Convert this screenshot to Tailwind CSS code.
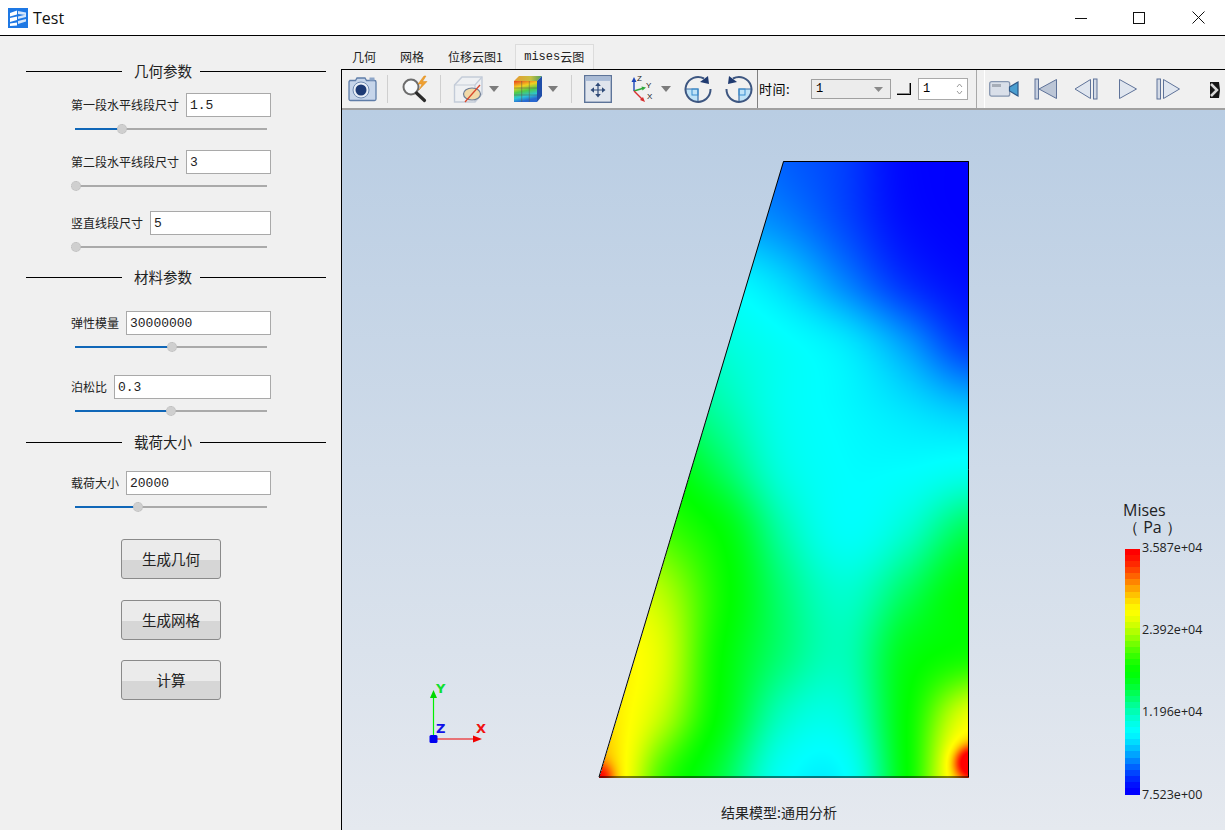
<!DOCTYPE html>
<html lang="zh">

<head>
    <meta charset="UTF-8" />
    <title>Test</title>
    <script src="https://cdn.jsdelivr.net/npm/@tailwindcss/browser@4"></script>
</head>

<body class="w-[1225px] h-[830px] overflow-hidden bg-[#f0f0f0] text-black font-['Noto_Sans_CJK_SC','Noto_Sans',sans-serif]">
    <!-- TITLE BAR -->
    <header class="h-9 bg-white border-b border-black flex items-center pl-[8px]">
        <svg width="20" height="20" viewBox="0 0 20 20">
            <rect width="20" height="20" fill="#1e78e4" />
            <path d="M2 5l7-2.500v4L2 8.500zM2 10l7-1.500v3.500L2 14zM2 15.500l7-1v3L2 18z" fill="#fff" />
            <path d="M10 3l8 1.500v2.500l-8-1zM10 8.500l8-2v2.500l-8 2zM10 13l8-2v2.500l-8 2.500z" fill="#d4e6fb" />
        </svg>
        <span class="ml-[5px] text-[16px] leading-none font-['Open_Sans',sans-serif] text-[#111]">Test</span>
        <div class="ml-auto flex items-center h-full">
            <svg class="mr-[46px]" width="12" height="12" viewBox="0 0 12 12"><path d="M0 6.500h12" stroke="#111" /></svg>
            <svg class="mr-[47px]" width="12" height="12" viewBox="0 0 12 12"><rect x=".5" y=".5" width="11" height="11" fill="none" stroke="#111" /></svg>
            <svg class="mr-[20px]" width="13" height="13" viewBox="0 0 13 13"><path d="M.5.500l12 12M12.500.500l-12 12" stroke="#111" /></svg>
        </div>
    </header>

    <div class="flex h-[794px]">
        <!-- LEFT PANEL -->
        <aside class="w-[341px] shrink-0 bg-[#f0f0f0] pt-[25px] text-[#222]">
            <div class="flex items-center pl-[26px] pr-[15px] h-5 gap-2 text-[14.5px] leading-none">
                <span class="w-[96px] h-px bg-black"></span><span class="ml-1">几何参数</span><span class="flex-1 h-px bg-black"></span>
            </div>
            <div class="mt-[12px] flex items-center gap-[7px] pl-[71px] pr-[70px] h-6 text-[12px]">
                <label class="whitespace-nowrap">第一段水平线段尺寸</label>
                <input class="flex-1 min-w-0 h-6 bg-white border border-[#a9a9a9] pl-[3px] text-[13px] font-['Liberation_Mono',monospace] outline-none" value="1.5" />
            </div>
            <div class="relative ml-[75px] mt-[11px] w-[192px] h-[2px] bg-[#aaaaaa]">
                <div class="h-full w-[47px] bg-[#1067b8]"></div>
                <span class="absolute left-[42px] top-[-4px] w-[10px] h-[10px] rounded-full bg-[#cfcfcf] border border-dotted border-[#bbb]"></span>
            </div>
            <div class="mt-[20px] flex items-center gap-[7px] pl-[71px] pr-[70px] h-6 text-[12px]">
                <label class="whitespace-nowrap">第二段水平线段尺寸</label>
                <input class="flex-1 min-w-0 h-6 bg-white border border-[#a9a9a9] pl-[3px] text-[13px] font-['Liberation_Mono',monospace] outline-none" value="3" />
            </div>
            <div class="relative ml-[75px] mt-[11px] w-[192px] h-[2px] bg-[#aaaaaa]">
                <span class="absolute left-[-4px] top-[-4px] w-[10px] h-[10px] rounded-full bg-[#cfcfcf] border border-dotted border-[#bbb]"></span>
            </div>
            <div class="mt-[24px] flex items-center gap-[7px] pl-[71px] pr-[70px] h-6 text-[12px]">
                <label class="whitespace-nowrap">竖直线段尺寸</label>
                <input class="flex-1 min-w-0 h-6 bg-white border border-[#a9a9a9] pl-[3px] text-[13px] font-['Liberation_Mono',monospace] outline-none" value="5" />
            </div>
            <div class="relative ml-[75px] mt-[11px] w-[192px] h-[2px] bg-[#aaaaaa]">
                <span class="absolute left-[-4px] top-[-4px] w-[10px] h-[10px] rounded-full bg-[#cfcfcf] border border-dotted border-[#bbb]"></span>
            </div>

            <div class="mt-[19px] flex items-center pl-[26px] pr-[15px] h-5 gap-2 text-[14.5px] leading-none">
                <span class="w-[96px] h-px bg-black"></span><span class="ml-1">材料参数</span><span class="flex-1 h-px bg-black"></span>
            </div>
            <div class="mt-[24px] flex items-center gap-[7px] pl-[71px] pr-[70px] h-6 text-[12px]">
                <label class="whitespace-nowrap">弹性模量</label>
                <input class="flex-1 min-w-0 h-6 bg-white border border-[#a9a9a9] pl-[3px] text-[13px] font-['Liberation_Mono',monospace] outline-none" value="30000000" />
            </div>
            <div class="relative ml-[75px] mt-[11px] w-[192px] h-[2px] bg-[#aaaaaa]">
                <div class="h-full w-[97px] bg-[#1067b8]"></div>
                <span class="absolute left-[92px] top-[-4px] w-[10px] h-[10px] rounded-full bg-[#cfcfcf] border border-dotted border-[#bbb]"></span>
            </div>
            <div class="mt-[27px] flex items-center gap-[7px] pl-[71px] pr-[70px] h-6 text-[12px]">
                <label class="whitespace-nowrap">泊松比</label>
                <input class="flex-1 min-w-0 h-6 bg-white border border-[#a9a9a9] pl-[3px] text-[13px] font-['Liberation_Mono',monospace] outline-none" value="0.3" />
            </div>
            <div class="relative ml-[75px] mt-[11px] w-[192px] h-[2px] bg-[#aaaaaa]">
                <div class="h-full w-[96px] bg-[#1067b8]"></div>
                <span class="absolute left-[91px] top-[-4px] w-[10px] h-[10px] rounded-full bg-[#cfcfcf] border border-dotted border-[#bbb]"></span>
            </div>

            <div class="mt-[20px] flex items-center pl-[26px] pr-[15px] h-5 gap-2 text-[14.5px] leading-none">
                <span class="w-[96px] h-px bg-black"></span><span class="ml-1">载荷大小</span><span class="flex-1 h-px bg-black"></span>
            </div>
            <div class="mt-[19px] flex items-center gap-[7px] pl-[71px] pr-[70px] h-6 text-[12px]">
                <label class="whitespace-nowrap">载荷大小</label>
                <input class="flex-1 min-w-0 h-6 bg-white border border-[#a9a9a9] pl-[3px] text-[13px] font-['Liberation_Mono',monospace] outline-none" value="20000" />
            </div>
            <div class="relative ml-[75px] mt-[11px] w-[192px] h-[2px] bg-[#aaaaaa]">
                <div class="h-full w-[63px] bg-[#1067b8]"></div>
                <span class="absolute left-[58px] top-[-4px] w-[10px] h-[10px] rounded-full bg-[#cfcfcf] border border-dotted border-[#bbb]"></span>
            </div>

            <div class="mt-[31px] flex flex-col items-center pl-[1px]">
                <button class="w-[100px] h-10 rounded-[3px] border border-[#8a8a8a] text-[14.5px] text-[#222] bg-[linear-gradient(#ebebeb_52%,#d6d6d6_52%)]">生成几何</button>
                <button class="mt-[21px] w-[100px] h-10 rounded-[3px] border border-[#8a8a8a] text-[14.5px] text-[#222] bg-[linear-gradient(#ebebeb_52%,#d6d6d6_52%)]">生成网格</button>
                <button class="mt-[20px] w-[100px] h-10 rounded-[3px] border border-[#8a8a8a] text-[14.5px] text-[#222] bg-[linear-gradient(#ebebeb_52%,#d6d6d6_52%)]">计算</button>
            </div>
        </aside>

        <!-- RIGHT PANEL -->
        <main class="flex-1 flex flex-col min-w-0">
            <!-- TABS -->
            <nav class="h-[33px] flex items-end text-[12px] text-[#222] leading-none">
                <span class="ml-[11px] h-[24px] flex items-center">几何</span>
                <span class="ml-[24px] h-[24px] flex items-center">网格</span>
                <span class="ml-[24px] h-[24px] flex items-center">位移云图1</span>
                <span class="ml-[12px] w-[79px] h-[25px] flex items-center justify-center border border-b-0 border-[#dcdcdc] bg-[#f3f3f3]"><span class="font-['Liberation_Mono',monospace]">mises</span>云图</span>
            </nav>

            <div class="flex-1 flex flex-col border-l border-t border-black">
                <!-- TOOLBAR -->
                <div class="h-10 shrink-0 flex items-center bg-[#f0f0f0] border-b-2 border-[#a0a0a0] relative">
                    <svg class="ml-[5px]" width="30" height="26" viewBox="0 0 30 26">
                        <path d="M2.500 4.500h6l1.500-2.500h8l1.500 2.500h8a1.500 1.500 0 0 1 1.500 1.500v17a1.500 1.500 0 0 1-1.500 1.500h-24a1.500 1.500 0 0 1-1.500-1.500v-17a1.500 1.500 0 0 1 1.500-1.500z" fill="#c6d5ea" stroke="#5f7da8" stroke-width="1.300" />
                        <rect x="22.500" y="1.500" width="5" height="3" fill="#8ea6c8" />
                        <circle cx="14" cy="14" r="8" fill="#e9eff7" stroke="#6f8ab0" />
                        <circle cx="14" cy="14" r="5.500" fill="#1d3a74" />
                    </svg>
                    <span class="ml-[10px] w-px h-[28px] bg-[#cfcfcf]"></span>
                    <svg class="ml-[12px]" width="31" height="28" viewBox="0 0 31 28">
                        <circle cx="11" cy="12" r="7.500" fill="#f7f9fb" stroke="#6d6d6d" stroke-width="2" />
                        <path d="M16.500 18l8 7.500" stroke="#2b2b2b" stroke-width="3.200" stroke-linecap="round" />
                        <path d="M24 1l-6 8h4l-3 6 8-8.500h-4.500L26 1z" fill="#f0a030" stroke="#d98a1c" stroke-width=".5" />
                    </svg>
                    <span class="ml-[9px] w-px h-[28px] bg-[#cfcfcf]"></span>
                    <svg class="ml-[12px]" width="31" height="30" viewBox="0 0 31 30">
                        <path d="M1.500 11L9 3h20v17l-7 8H1.500z" fill="#eef0f3" stroke="#c3cbd8" stroke-width="1.400" />
                        <path d="M1.500 11h20.500v17M22 11l7-8" fill="none" stroke="#c3cbd8" stroke-width="1.200" />
                        <ellipse cx="19" cy="20" rx="8.500" ry="6" fill="#f1d9a8" stroke="#6f7f96" stroke-width="1.200" />
                        <path d="M12 28L27 11" stroke="#d9472b" stroke-width="1.300" />
                    </svg>
                    <svg class="ml-[4px]" width="12" height="8" viewBox="0 0 12 8"><path d="M1 1h10L6 7z" fill="#7c7c7c" /></svg>
                    <svg class="ml-[12px]" width="31" height="28" viewBox="0 0 31 28">
                        <defs>
                            <linearGradient id="cubeFront" x1="0" y1="0" x2=".25" y2="1">
                                <stop offset="0" stop-color="#e8401f" />
                                <stop offset=".3" stop-color="#f2d020" />
                                <stop offset=".55" stop-color="#4ecb4a" />
                                <stop offset=".8" stop-color="#2bc4d8" />
                                <stop offset="1" stop-color="#2868d0" />
                            </linearGradient>
                            <linearGradient id="cubeTop" x1="0" y1="0" x2="1" y2="0">
                                <stop offset="0" stop-color="#e89a30" />
                                <stop offset=".6" stop-color="#c8c040" />
                                <stop offset="1" stop-color="#4aa060" />
                            </linearGradient>
                        </defs>
                        <path d="M2 6l5-5h23l-5 5z" fill="url(#cubeTop)" />
                        <path d="M25 6l5-5v20l-5 6z" fill="#1f4da8" />
                        <rect x="2" y="6" width="23" height="21" fill="url(#cubeFront)" />
                        <path d="M9.700 6v21M17.300 6v21M2 13h23M2 20h23" stroke="#5a5a4a" stroke-width=".5" />
                    </svg>
                    <svg class="ml-[4px]" width="12" height="8" viewBox="0 0 12 8"><path d="M1 1h10L6 7z" fill="#7c7c7c" /></svg>
                    <span class="ml-[12px] w-px h-[28px] bg-[#cfcfcf]"></span>
                    <svg class="ml-[12px]" width="28" height="28" viewBox="0 0 28 28">
                        <rect x=".7" y=".7" width="26.600" height="26.600" fill="#e0e5ed" stroke="#5d7499" stroke-width="1.400" />
                        <rect x="1.400" y="1.400" width="25.200" height="4.500" fill="#a9bbd6" />
                        <path d="M14 9v12M8 15h12" stroke="#2f4a78" stroke-width="1.200" />
                        <path d="M14 7.500l-2.800 3.500h5.600zM14 22.500l-2.800-3.500h5.600zM6.500 15l3.500-2.800v5.600zM21.500 15L18 12.200v5.600z" fill="#2f4a78" />
                    </svg>
                    <div class="relative ml-[16px] w-[28px] h-[28px] text-[8px] leading-none font-['Liberation_Sans',sans-serif] text-[#222]">
                        <svg class="absolute inset-0" width="28" height="28" viewBox="0 0 28 28">
                            <path d="M6 16V5" stroke="#1c45b8" stroke-width="1.400" /><path d="M6 2L3.500 7h5z" fill="#1c45b8" />
                            <path d="M6 16l10-3" stroke="#2ea83a" stroke-width="1.400" /><path d="M18 12.500l-4.500-1 1 4z" fill="#2ea83a" />
                            <path d="M6 16l9 9" stroke="#d93030" stroke-width="1.400" /><path d="M17 27l-2-5-3 3z" fill="#d93030" />
                        </svg>
                        <span class="absolute left-[9px] top-0">Z</span>
                        <span class="absolute left-[18px] top-[7px]">Y</span>
                        <span class="absolute left-[19px] top-[18px]">X</span>
                    </div>
                    <svg class="ml-[4px]" width="12" height="8" viewBox="0 0 12 8"><path d="M1 1h10L6 7z" fill="#7c7c7c" /></svg>
                    <svg class="ml-[12px]" width="28" height="28" viewBox="0 0 28 28">
                        <path d="M14 14H1A13 13 0 0 0 14 27z" fill="#bfe3f7" />
                        <path d="M1 14h13V27" fill="none" stroke="#3a6fa8" stroke-width="1.200" />
                        <rect x="8" y="14" width="6" height="6" fill="none" stroke="#3a8fd0" />
                        <path d="M20 3.500A12.500 12.500 0 1 0 26.500 14" fill="none" stroke="#3d5680" stroke-width="2" />
                        <path d="M16 7l8-6 1 8z" fill="#1f3a70" />
                    </svg>
                    <svg class="ml-[13px] -scale-x-100" width="28" height="28" viewBox="0 0 28 28">
                        <path d="M14 14H1A13 13 0 0 0 14 27z" fill="#bfe3f7" />
                        <path d="M1 14h13V27" fill="none" stroke="#3a6fa8" stroke-width="1.200" />
                        <rect x="8" y="14" width="6" height="6" fill="none" stroke="#3a8fd0" />
                        <path d="M20 3.500A12.500 12.500 0 1 0 26.500 14" fill="none" stroke="#3d5680" stroke-width="2" />
                        <path d="M16 7l8-6 1 8z" fill="#1f3a70" />
                    </svg>
                    <span class="ml-[4px] w-px h-full bg-[#808080]"></span>
                    <span class="ml-px text-[13px] tracking-[0.5px] whitespace-nowrap w-[52px]">时间:</span>
                    <div class="w-[80px] h-[20px] border border-[#a0a0a0] bg-[#ececec] flex items-center justify-between pl-1 pr-[7px] text-[12px] font-['Liberation_Mono',monospace]">
                        <span>1</span>
                        <svg width="9" height="5" viewBox="0 0 9 5"><path d="M0 0h9L4.500 5z" fill="#8a8a8a" /></svg>
                    </div>
                    <span class="ml-[6px] w-[14px] h-[12px] border-r border-b border-black shadow-[inset_-1px_-1px_0_#8a8a8a]"></span>
                    <div class="ml-[7px] w-[50px] h-[22px] border border-[#a9a9a9] bg-white flex items-center justify-between pl-1 pr-[4px] text-[12px] font-['Liberation_Mono',monospace]">
                        <span>1</span>
                        <svg width="7" height="12" viewBox="0 0 7 12"><path d="M1 4l2.500-3L6 4M1 8l2.500 3L6 8" fill="none" stroke="#9a9a9a" /></svg>
                    </div>
                    <span class="ml-[8px] w-px h-full bg-[#a8a8a8]"></span>
                    <span class="ml-[7px] w-px h-full bg-white"></span>
                    <svg class="ml-[4px]" width="30" height="20" viewBox="0 0 30 20">
                        <rect x=".7" y="2.700" width="20" height="14.500" rx="2" fill="#d9dfe9" stroke="#8696b0" stroke-width="1.300" />
                        <rect x="3" y="5" width="9" height="3" fill="#a6adb8" />
                        <path d="M20.500 8l8.500-5v14l-8.500-5z" fill="#4a9ed0" stroke="#2f5a88" stroke-width="1.200" />
                    </svg>
                    <svg class="ml-[15px]" width="24" height="22" viewBox="0 0 24 22">
                        <rect x="1" y="1" width="3.500" height="20" fill="#c6cfdf" stroke="#5f7399" />
                        <path d="M22.500 1.500v19L5 11z" fill="#bcc6d6" stroke="#5f7399" />
                    </svg>
                    <svg class="ml-[16px]" width="25" height="22" viewBox="0 0 25 22">
                        <path d="M16.500 1.500v19L1 11z" fill="#e0e6ef" stroke="#5f7399" />
                        <rect x="19.500" y="1" width="3.500" height="20" fill="#d3dae6" stroke="#5f7399" />
                    </svg>
                    <svg class="ml-[19px]" width="20" height="22" viewBox="0 0 20 22">
                        <path d="M1.500 1.500v19L18.500 11z" fill="#e0e6ef" stroke="#5f7399" />
                    </svg>
                    <svg class="ml-[18px]" width="25" height="22" viewBox="0 0 25 22">
                        <rect x="1" y="1" width="3.500" height="20" fill="#d3dae6" stroke="#5f7399" />
                        <path d="M7.500 1.500v19L23.500 11z" fill="#e0e6ef" stroke="#5f7399" />
                    </svg>
                    <svg class="absolute right-[3px] top-[12px]" width="12" height="16" viewBox="0 0 12 16">
                        <rect width="12" height="16" fill="#151515" />
                        <path d="M1 2l6 6-6 6" fill="none" stroke="#d8d8d8" stroke-width="2.500" />
                        <path d="M9 0h3v16H9l1-8z" fill="#f0f0f0" />
                    </svg>
                </div>

                <!-- VIEWPORT -->
                <section class="relative flex-1 overflow-hidden bg-[linear-gradient(#b9cde3,#e5e9ef)]">
                    <canvas id="field" class="absolute left-[256px] top-[50px]" width="372" height="618"></canvas>

                    <!-- axes triad -->
                    <div class="absolute left-[80px] top-[570px] w-[70px] h-[66px] font-['DejaVu_Sans',sans-serif] font-bold text-[13px] leading-none">
                        <svg class="absolute inset-0" width="70" height="66" viewBox="0 0 70 66">
                            <path d="M11.500 59V14" stroke="#00f000" stroke-width="1.200" />
                            <path d="M11.500 10l-3.500 8h7z" fill="#00d800" />
                            <path d="M11.500 59H55" stroke="#f00000" stroke-width="1.200" />
                            <path d="M60 59l-9-3.500v7z" fill="#f00000" />
                            <rect x="7.500" y="55" width="8" height="8" rx="1.500" fill="#0000f0" />
                        </svg>
                        <span class="absolute left-[14px] top-[2px] text-[#10e030]">Y</span>
                        <span class="absolute left-[14px] top-[42px] text-[#1010e8]">Z</span>
                        <span class="absolute left-[54px] top-[42px] text-[#f01010]">X</span>
                    </div>

                    <!-- colour legend -->
                    <div class="absolute left-[781px] top-[392px] text-[16px] leading-[17px] font-['Open_Sans',sans-serif] text-[#222]">
                        <div>Mises</div>
                        <div>（ Pa ）</div>
                    </div>
                    <canvas id="legend" class="absolute left-[783px] top-[439px]" width="15" height="246"></canvas>
                    <span class="absolute left-[800px] top-[430px] text-[12.5px] leading-4 font-['Open_Sans',sans-serif] text-[#222]">3.587e+04</span>
                    <span class="absolute left-[800px] top-[512px] text-[12.5px] leading-4 font-['Open_Sans',sans-serif] text-[#222]">2.392e+04</span>
                    <span class="absolute left-[800px] top-[594px] text-[12.5px] leading-4 font-['Open_Sans',sans-serif] text-[#222]">1.196e+04</span>
                    <span class="absolute left-[800px] top-[677px] text-[12.5px] leading-4 font-['Open_Sans',sans-serif] text-[#222]">7.523e+00</span>

                    <span class="absolute left-[379px] top-[693px] text-[14px] leading-[18px] text-[#222]">结果模型:通用分析</span>
                </section>
            </div>
        </main>
    </div>

    <script>
        // rainbow map: 0 blue, .25 cyan, .5 green, .75 yellow, 1 red
        // each quarter is half eased so the pure hues sit in slightly wider bands
        function rainbow(t) {
            t = Math.max(0, Math.min(1, t));
            const seg = Math.min(3, Math.floor(t * 4));
            const f = t * 4 - seg;
            const s = 0.5 * f + 0.5 * f * f * (3 - 2 * f);
            if (seg === 0) return [0, s * 255, 255];
            if (seg === 1) return [0, 255, (1 - s) * 255];
            if (seg === 2) return [s * 255, 255, 0];
            return [255, (1 - s) * 255, 0];
        }

        // stress values read off the plot, 7 columns by 11 rows
        const grid = [
            [.20, .17, .13, .10, .07, .01, .00],
            [.22, .19, .16, .13, .08, .02, .00],
            [.30, .27, .25, .20, .13, .06, .02],
            [.38, .35, .30, .26, .22, .15, .07],
            [.45, .40, .34, .27, .24, .21, .18],
            [.55, .50, .40, .29, .25, .25, .27],
            [.65, .58, .49, .34, .26, .31, .41],
            [.72, .67, .52, .38, .31, .40, .50],
            [.78, .71, .50, .38, .33, .47, .52],
            [.80, .68, .48, .32, .30, .50, .72],
            [.85, .58, .42, .26, .25, .50, .82]
        ];

        function cubic(a, b, c, d, t) {
            return b + 0.5 * t * (c - a + t * (2 * a - 5 * b + 4 * c - d + t * (3 * (b - c) + d - a)));
        }

        function sample(u, v) {
            const gx = u * 6, gy = v * 10;
            const ix = Math.min(5, Math.floor(gx)), iy = Math.min(9, Math.floor(gy));
            const at = (r, c) => grid[Math.max(0, Math.min(10, r))][Math.max(0, Math.min(6, c))];
            const rows = [];
            for (let r = -1; r <= 2; r++) {
                rows.push(cubic(at(iy + r, ix - 1), at(iy + r, ix), at(iy + r, ix + 1), at(iy + r, ix + 2), gx - ix));
            }
            return cubic(rows[0], rows[1], rows[2], rows[3], gy - iy);
        }

        // canvas origin is page (598,160)
        const field = document.getElementById('field').getContext('2d');
        const img = field.createImageData(372, 618);
        for (let y = 0; y < 618; y++) {
            for (let x = 0; x < 372; x++) {
                const px = x + 598, py = y + 160;
                const leftEdge = 783 - (py - 161) * (184 / 616);
                if (px < leftEdge || px > 968 || py < 161 || py > 777) continue;
                let val = sample((px - 599) / 369, (py - 161) / 616);
                // stress peaks at the two bottom corners
                val += 0.15 * Math.exp(-((px - 599) ** 2 + (py - 777) ** 2) / 200);
                val += 0.30 * Math.exp(-((px - 970) ** 2 + (py - 762) ** 2) / 260);
                const c = rainbow(val), i = (y * 372 + x) * 4;
                img.data[i] = c[0]; img.data[i + 1] = c[1]; img.data[i + 2] = c[2]; img.data[i + 3] = 255;
            }
        }
        field.putImageData(img, 0, 0);
        field.strokeStyle = '#000';
        field.lineWidth = 1;
        field.beginPath();
        field.moveTo(185.5, 1.5);
        field.lineTo(370.5, 1.5);
        field.lineTo(370.5, 617);
        field.lineTo(1, 617);
        field.closePath();
        field.stroke();

        // stepped legend bar
        const legend = document.getElementById('legend').getContext('2d');
        const bands = 40;
        for (let b = 0; b < bands; b++) {
            const c = rainbow(1 - b / (bands - 1));
            legend.fillStyle = `rgb(${c[0]},${c[1]},${c[2]})`;
            legend.fillRect(0, Math.floor(b * 246 / bands), 15, Math.ceil(246 / bands));
        }
    </script>
</body>

</html>
